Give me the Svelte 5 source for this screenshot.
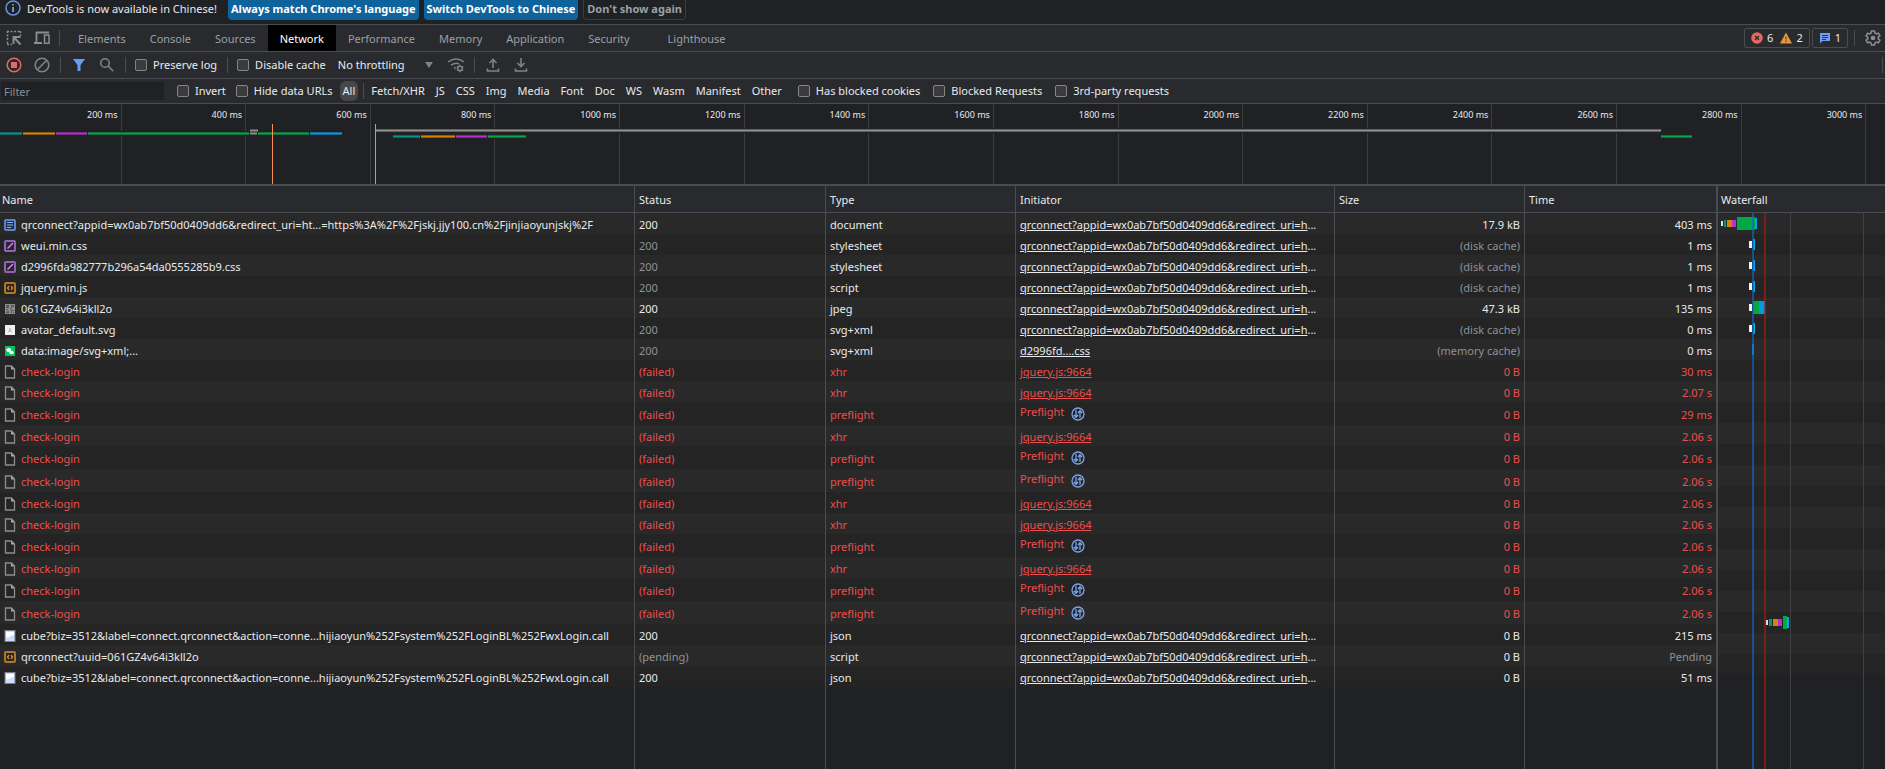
<script lang="ts">
  const tabs = [
    "Elements",
    "Console",
    "Sources",
    "Network",
    "Performance",
    "Memory",
    "Application",
    "Security",
    "Lighthouse",
  ];

  const types = [
    "Fetch/XHR",
    "JS",
    "CSS",
    "Img",
    "Media",
    "Font",
    "Doc",
    "WS",
    "Wasm",
    "Manifest",
    "Other",
  ];

  let activeTab = $state("Network");
  let activeType = $state("All");

  // overview scale: the visible window starts at 5 ms and spans 3025 ms
  const ticks = Array.from({ length: 15 }, (_, i) => (i + 1) * 200);
  const tickLeft = (ms: number) => ((ms - 5) / 3025) * 100;

  const teal = "#009688";
  const orange = "#d68400";
  const purple = "#b72fd0";
  const green = "#00a846";
  const blue = "#039be5";
  const grey = "#8f8f8a";

  // x, width, y, colour
  const overview: [number, number, number, string][] = [
    [0, 22, 28, teal],
    [23, 32, 28, orange],
    [56, 31, 28, purple],
    [88, 161, 28, green],
    [258, 51, 28, green],
    [310, 32, 28, blue],
    [376, 1285, 25, grey],
    [393, 27, 31, teal],
    [421, 34, 31, orange],
    [456, 31, 31, purple],
    [488, 38, 31, green],
    [1661, 31, 31, green],
  ];

  const long = "qrconnect?appid=wx0ab7bf50d0409dd6&redirect_uri=h";
  const cube =
    "cube?biz=3512&label=connect.qrconnect&action=conne...hijiaoyun%252Fsystem%252FLoginBL%252FwxLogin.call";

  const ok = (icon: string, name: string, type: string, size: string, time: string, rest = {}) => ({
    icon, name, type, size, time, status: "200", initiator: long, cut: true, ...rest,
  });
  const failed = (type: string, time = "2.06 s") => ({
    icon: "file", name: "check-login", type, size: "0 B", time, status: "(failed)",
    initiator: type === "xhr" ? "jquery.js:9664" : "Preflight", cut: false, error: true,
  });

  const rows: any[] = [
    ok("doc", "qrconnect?appid=wx0ab7bf50d0409dd6&redirect_uri=ht...=https%3A%2F%2Fjskj.jjy100.cn%2Fjinjiaoyunjskj%2F", "document", "17.9 kB", "403 ms"),
    ok("css", "weui.min.css", "stylesheet", "(disk cache)", "1 ms", { cached: true }),
    ok("css", "d2996fda982777b296a54da0555285b9.css", "stylesheet", "(disk cache)", "1 ms", { cached: true }),
    ok("js", "jquery.min.js", "script", "(disk cache)", "1 ms", { cached: true }),
    ok("qr", "061GZ4v64i3kll2o", "jpeg", "47.3 kB", "135 ms"),
    ok("avatar", "avatar_default.svg", "svg+xml", "(disk cache)", "0 ms", { cached: true }),
    ok("wechat", "data:image/svg+xml;...", "svg+xml", "(memory cache)", "0 ms", { cached: true, initiator: "d2996fd....css", cut: false }),
    failed("xhr", "30 ms"),
    failed("xhr", "2.07 s"),
    failed("preflight", "29 ms"),
    failed("xhr"),
    failed("preflight"),
    failed("preflight"),
    failed("xhr"),
    failed("xhr"),
    failed("preflight"),
    failed("xhr"),
    failed("preflight"),
    failed("preflight"),
    ok("image", cube, "json", "0 B", "215 ms"),
    ok("js", "qrconnect?uuid=061GZ4v64i3kll2o", "script", "0 B", "Pending", { status: "(pending)", pending: true }),
    ok("image", cube, "json", "0 B", "51 ms"),
  ];

  // waterfall bars: row, x, width, height, colour
  const queued = "#e0e0e0";
  const bars: [number, number, number, number, string][] = [
    [0, 3, 2, 5, queued],
    [0, 6, 2, 7, teal],
    [0, 9, 5, 7, orange],
    [0, 14, 4, 7, purple],
    [0, 19, 18, 13, green],
    [0, 37, 2, 11, "#03a9f4"],
    ...[1, 2, 3, 5].flatMap((r): [number, number, number, number, string][] => [
      [r, 31, 3, 7, "#f1f1f1"],
      [r, 35, 2, 11, "#03a9f4"],
    ]),
    [4, 31, 3, 7, "#f1f1f1"],
    [4, 35, 6, 13, green],
    [4, 41, 6, 13, blue],
    [6, 34, 2, 11, "#039be5"],
    [19, 48, 2, 5, queued],
    [19, 51, 3, 7, teal],
    [19, 55, 5, 7, orange],
    [19, 60, 4, 7, purple],
    [19, 65, 4, 13, green],
    [19, 69, 2, 11, "#03a9f4"],
  ];
</script>

{#snippet check(label: string)}
  <label class="check"><input type="checkbox" />{label}</label>
{/snippet}

{#snippet fileIcon(kind: string)}
  <svg width="12" height="14" viewBox="0 0 12 14">
    {#if kind === "doc"}
      <rect x="1" y="2" width="10" height="10" rx="1" fill="#253046" stroke="#5b83c4" stroke-width="2" />
      <path d="M3 4.5h6M3 7h6M3 9.5h4" stroke="#8ab4f8" />
    {:else if kind === "css"}
      <rect x="1" y="2" width="10" height="10" rx="1" fill="#2b2430" stroke="#9563b5" stroke-width="2" />
      <path d="M3.5 9.5l2-2M5.5 7.5l3.5-3.5" stroke="#c58af9" stroke-width="1.5" />
    {:else if kind === "js"}
      <rect x="1" y="2" width="10" height="10" rx="1" fill="#2b2620" stroke="#b0752a" stroke-width="2" />
      <path d="M5 5.2L3.5 7 5 8.8M7 5.2L8.5 7 7 8.8" fill="none" stroke="#e8963a" stroke-width="1.2" />
    {:else if kind === "qr"}
      <rect x="1" y="2" width="10" height="10" fill="#8c8c8c" />
      <path d="M2 3h3v3H2zM7 3h3v2H8v1H7zM6 6h1v2H6zM2 7h2v1H2zM3 9h2v2H2v-1h1zM7 8h3v1H8v2H7zM9 10h1v1H9z" fill="#5a5a5a" />
    {:else if kind === "avatar"}
      <rect x="1" y="2" width="10" height="10" fill="#efefef" />
      <path d="M5 5h2v2.500l1 .5v1H4V8l1-.5z" fill="#c4c4c4" />
    {:else if kind === "wechat"}
      <rect x="1" y="2" width="10" height="10" fill="#07c160" />
      <ellipse cx="4.800" cy="6" rx="2.500" ry="2" fill="#fff" />
      <ellipse cx="7.500" cy="8.500" rx="2.300" ry="1.800" fill="#fff" />
    {:else if kind === "image"}
      <rect x="1" y="1.500" width="10" height="11" fill="#cfdcf7" stroke="#77808f" />
      <path d="M2 8.500V3h8v3.500H7L5.500 8z" fill="#fff" />
    {:else}
      <path d="M2 1h5.500L10.500 4v9H1.500V1z" fill="none" stroke="#8d8d8d" stroke-width="1.300" />
      <path d="M7 1v3.500h3.500z" fill="#a9a9a9" />
    {/if}
  </svg>
{/snippet}

<div class="devtools">
  <div class="infobar">
    <svg width="16" height="16" viewBox="0 0 16 16">
      <circle cx="8" cy="8" r="7" fill="none" stroke="#6c93e0" stroke-width="1.500" />
      <path d="M8 7v5M8 4v1.600" stroke="#8ab4f8" stroke-width="1.500" />
    </svg>
    <span class="message">DevTools is now available in Chinese!</span>
    <button class="primary">Always match Chrome's language</button>
    <button class="primary">Switch DevTools to Chinese</button>
    <button class="quiet">Don't show again</button>
  </div>

  <div class="tabbar">
    <button class="icon" aria-label="Inspect element">
      <svg width="16" height="16" viewBox="0 0 16 16" fill="none" stroke="#8b8d90">
        <path d="M1 1.500h14M1.500 1v14M14.500 1v5M1 14.500h5" stroke-width="1.500" stroke-dasharray="2 1.500" />
        <path d="M7.500 14V7h7M8 7.500l6.500 7" stroke-width="2" />
      </svg>
    </button>
    <button class="icon" aria-label="Toggle device toolbar">
      <svg width="18" height="16" viewBox="0 0 18 16" fill="none" stroke="#8b8d90">
        <path d="M3.500 12V2.500H16M1 13h8" stroke-width="1.800" />
        <rect x="11.500" y="5" width="4.500" height="8.300" stroke-width="1.500" />
      </svg>
    </button>
    <i class="divider"></i>
    <nav>
      {#each tabs as tab}
        <button
          class={tab === activeTab ? "tab active" : "tab"}
          onclick={() => (activeTab = tab)}>{tab}</button
        >
      {/each}
    </nav>
    <div class="status">
      <button class="counter">
        <svg width="12" height="12" viewBox="0 0 12 12">
          <circle cx="6" cy="6" r="5.800" fill="#e46962" />
          <path d="M4 4l4 4M8 4L4 8" stroke="#292a2d" stroke-width="1.300" />
        </svg>
        <span>6</span>
        <svg width="12" height="12" viewBox="0 0 12 12">
          <path d="M6 .5L12 11.500H0z" fill="#e8963a" />
          <path d="M6 4.500v3M6 8.500v1.500" stroke="#7a4a10" stroke-width="1.300" />
        </svg>
        <span>2</span>
      </button>
      <button class="counter">
        <svg width="12" height="12" viewBox="0 0 12 12">
          <path d="M1 1h10v8H3.500L1 11.500z" fill="#6f9cf0" />
          <path d="M3 3.500h6M3 5.500h6M3 7.500h4" stroke="#24385f" />
        </svg>
        <span>1</span>
      </button>
      <i class="divider"></i>
      <button class="icon gear" aria-label="Settings">
        <svg width="16" height="16" viewBox="0 0 16 16">
          <path
            d="M6.500 1h3l.4 2 1.500.9 2-.7 1.500 2.600L13.300 7.200v1.600l1.600 1.400-1.500 2.600-2-.7-1.500.9-.4 2h-3l-.4-2-1.500-.9-2 .7-1.500-2.600 1.600-1.400V7.200L1.100 5.800l1.500-2.600 2 .7 1.500-.9z"
            fill="none" stroke="#8b8d90" stroke-width="1.500" />
          <circle cx="8" cy="8" r="2.300" fill="#8b8d90" />
        </svg>
      </button>
    </div>
  </div>

  <div class="toolbar">
    <button class="icon" aria-label="Stop recording">
      <svg width="16" height="16" viewBox="0 0 16 16">
        <circle cx="8" cy="8" r="6.800" fill="none" stroke="#e46962" stroke-width="1.500" />
        <rect x="5" y="5" width="6" height="6" fill="#e46962" />
      </svg>
    </button>
    <button class="icon" aria-label="Clear">
      <svg width="16" height="16" viewBox="0 0 16 16" fill="none" stroke="#808285" stroke-width="1.600">
        <circle cx="8" cy="8" r="6.800" />
        <path d="M3.500 12.500l9-9" />
      </svg>
    </button>
    <i class="divider"></i>
    <button class="icon" aria-label="Filter">
      <svg width="14" height="14" viewBox="0 0 14 14"><path d="M1 1h12L8.500 7v6h-3V7z" fill="#669df6" /></svg>
    </button>
    <button class="icon" aria-label="Search">
      <svg width="16" height="16" viewBox="0 0 16 16" fill="none" stroke="#808285" stroke-width="1.600">
        <circle cx="6" cy="6" r="4.300" />
        <path d="M9.300 9.300l5 5" />
      </svg>
    </button>
    <i class="divider"></i>
    {@render check("Preserve log")}
    <i class="divider"></i>
    {@render check("Disable cache")}
    <span class="throttle">
      <select aria-label="Throttling">
        <option>No throttling</option>
      </select>
      <svg width="8" height="6" viewBox="0 0 8 6"><path d="M0 0h8L4 6z" fill="#808285" /></svg>
    </span>
    <button class="icon" aria-label="Network conditions">
      <svg width="18" height="16" viewBox="0 0 18 16" fill="none" stroke="#808285" stroke-width="1.500">
        <path d="M1 5Q9-1 17 5M4 8.200Q8.500 5 12 7" />
        <path d="M6.500 10.500l2 2.500V9.500z" fill="#808285" stroke="none" />
        <circle cx="13" cy="11.500" r="2.200" />
        <path d="M13 7.800v1.500M13 13.800v1.500M9.800 9.700l1.200.7M15 12.700l1.300.7M9.800 13.400l1.200-.7M15 10.400l1.300-.7" />
      </svg>
    </button>
    <i class="divider"></i>
    <button class="icon" aria-label="Import HAR">
      <svg width="14" height="14" viewBox="0 0 14 14" fill="none" stroke="#808285" stroke-width="1.600">
        <path d="M7 10V1.500M3.500 5L7 1.500 10.500 5M1.500 10.500v2.500h11v-2.500" />
      </svg>
    </button>
    <button class="icon" aria-label="Export HAR">
      <svg width="14" height="14" viewBox="0 0 14 14" fill="none" stroke="#808285" stroke-width="1.600">
        <path d="M7 0v8.500M3.500 5L7 8.500 10.500 5M1.500 10.500v2.500h11v-2.500" />
      </svg>
    </button>
    <i class="divider end"></i>
  </div>

  <div class="filterbar">
    <input class="filter" type="text" placeholder="Filter" aria-label="Filter" />
    {@render check("Invert")}
    {@render check("Hide data URLs")}
    <div class="types">
      <button class:active={activeType === "All"} onclick={() => (activeType = "All")}>All</button>
      <i class="divider"></i>
      {#each types as type}
        <button class:active={activeType === type} onclick={() => (activeType = type)}>{type}</button>
      {/each}
    </div>
    <div class="more">
      {@render check("Has blocked cookies")}
      {@render check("Blocked Requests")}
      {@render check("3rd-party requests")}
    </div>
  </div>

  <div class="overview">
    {#each ticks as ms}
      <span class="tick" style="width: {tickLeft(ms)}%">{ms} ms</span>
    {/each}
    <svg width="100%" height="80" viewBox="0 0 1885 80" preserveAspectRatio="none">
      {#each overview as [x, width, y, color]}
        <rect {x} y={y - 1} {width} height="5" fill="#202124" />
        <rect {x} {y} {width} height="3" fill={color} opacity="0.6" />
        <rect {x} y={y + 1} {width} height="1" fill={color} />
      {/each}
      <path d="M250 26.500h8M250 29.500h7" stroke="#8f8f8a" stroke-width="2" />
      <rect x="272" y="20" width="1" height="60" fill="#f79256" />
      <rect x="375" y="20" width="1" height="60" fill="#3fd0c0" />
    </svg>
  </div>

  <div class="requests">
    <table>
      <colgroup>
        <col />
        <col class="status-col" />
        <col class="narrow" />
        <col class="wide" />
        <col class="narrow" />
        <col class="time" />
      </colgroup>
      <thead>
        <tr>
          <th>Name</th>
          <th>Status</th>
          <th>Type</th>
          <th>Initiator</th>
          <th>Size</th>
          <th>Time</th>
        </tr>
      </thead>
      <tbody>
        {#each rows as row}
          <tr class:error={row.error} class:preflight={row.type === "preflight"}>
            <td>
              <div class="name">{@render fileIcon(row.icon)}<span>{row.name}</span></div>
            </td>
            <td class:dim={row.cached || row.pending}>{row.status}</td>
            <td>{row.type}</td>
            <td>
              {#if row.type === "preflight"}
                <div class="initiator">
                  <span>Preflight</span>
                  <svg width="14" height="14" viewBox="0 0 14 14" fill="none" stroke="#7ba3ea">
                    <circle cx="7" cy="7" r="6" stroke-width="1.300" />
                    <path d="M5 3v7M2.800 8L5 10.300 7 8M9 11V4M7 6l2-2.300L11.200 6" stroke-width="1.300" />
                  </svg>
                </div>
              {:else}
                <a href="#source">{row.initiator}</a>{row.cut ? "..." : ""}
              {/if}
            </td>
            <td class="num" class:dim={row.cached}>{row.size}</td>
            <td class="num" class:dim={row.pending}>{row.time}</td>
          </tr>
        {/each}
        <tr class="filler">
          <td></td><td></td><td></td><td></td><td></td><td></td>
        </tr>
      </tbody>
    </table>

    <div class="waterfall">
      <div class="heading">Waterfall</div>
      <svg width="100%" height="100%">
        {#each rows as _, i}
          <rect x="0" y={i * 21} width="100%" height="21" fill={i % 2 ? "#242424" : "#292929"} />
        {/each}
        <path d="M72.500 0V2000M145.500 0V2000" stroke="#404144" />
        {#each bars as [row, x, width, height, color]}
          <rect {x} y={row * 21 + 10 - (height - 1) / 2} {width} {height} fill={color} />
        {/each}
        <rect x="34" y="0" width="2" height="100%" fill="#1565c0" opacity="0.65" />
        <rect x="46" y="0" width="2" height="100%" fill="#a31b12" opacity="0.65" />
      </svg>
    </div>
  </div>
</div>

<style>
  :global(body) {
    margin: 0;
    background: #202124;
  }

  .devtools {
    min-height: 100vh;
    display: flex;
    flex-direction: column;
    font-family: "Noto Sans", "Segoe UI", sans-serif;
    font-size: 11px;
    line-height: 16px;
    color: #e8eaed;
    background: #202124;
    white-space: nowrap;
  }

  button,
  input,
  select {
    font: inherit;
    color: inherit;
    background: none;
    border: none;
    margin: 0;
    padding: 0;
  }

  svg {
    display: block;
    flex: none;
  }

  .divider {
    width: 1px;
    height: 16px;
    background: #494c50;
    flex: none;
  }

  .icon {
    width: 28px;
    display: flex;
    justify-content: center;
    flex: none;
  }

  .infobar {
    height: 24px;
    display: flex;
    align-items: flex-start;
    gap: 5px;
    padding-left: 5px;
    border-bottom: 1px solid #494c50;
  }

  .infobar .message {
    width: 196px;
    padding: 1px 0 0 1px;
  }

  .infobar button {
    height: 20px;
    padding: 0 3px 2px;
    border-radius: 0 0 4px 4px;
    font-weight: 700;
  }

  .infobar .primary {
    background: #0e639c;
    color: #fff;
  }

  .infobar .quiet {
    border: 1px solid #3c3d40;
    border-top: none;
    color: #9aa0a6;
  }

  .tabbar,
  .toolbar,
  .filterbar {
    display: flex;
    align-items: center;
    background: #292a2d;
    border-bottom: 1px solid #494c50;
  }

  .tabbar,
  .toolbar {
    height: 26px;
  }

  .tabbar > .divider {
    margin: 0 6px 0 3px;
  }

  nav {
    display: flex;
    align-self: stretch;
    flex: 1;
  }

  .tab {
    padding: 1px 12px 0;
    color: #9aa0a6;
  }

  .tab.active {
    background: #000;
    color: #fff;
  }

  .tab:last-child {
    margin-left: 14px;
  }

  .status {
    display: flex;
    align-items: center;
    gap: 2px;
  }

  .counter {
    height: 20px;
    display: flex;
    align-items: center;
    gap: 4px;
    padding: 0 6px;
    border: 1px solid #494c50;
    border-radius: 2px;
  }

  .counter span + svg {
    margin-left: 3px;
  }

  .status .divider {
    margin-left: 4px;
  }

  .gear {
    padding-left: 4px;
  }

  .toolbar .divider {
    margin: 0 4px;
  }

  .toolbar .divider.end {
    margin: 0 2px 0 auto;
  }

  .check {
    display: flex;
    align-items: center;
    gap: 6px;
    padding: 0 5px;
  }

  .toolbar .check {
    padding-right: 6px;
  }

  .check input {
    appearance: none;
    width: 12px;
    height: 12px;
    background: #3b3b3b;
    border: 1px solid #858585;
    border-radius: 2px;
  }

  .throttle {
    display: flex;
    align-items: center;
    gap: 20px;
    padding: 0 9px 0 6px;
  }

  .throttle select {
    appearance: none;
  }

  .filterbar {
    height: 24px;
  }

  .filter {
    width: 160px;
    height: 18px;
    margin: 0 8px 0 1px;
    padding-left: 3px;
    background: #202124;
  }

  .filter::placeholder {
    color: #8b8d90;
  }

  .types {
    display: flex;
    align-items: center;
    gap: 1px;
    padding: 0 6px 0 2px;
  }

  .types .divider {
    margin: 0 1px 0 4px;
  }

  .types button {
    height: 20px;
    padding: 0 5px;
  }

  .types .active {
    padding: 0 3px;
    background: #474747;
    border-radius: 6px;
  }

  .more {
    display: flex;
    gap: 3px;
  }

  .overview {
    position: relative;
    height: 80px;
    border-bottom: 2px solid #494c50;
    overflow: hidden;
  }

  .tick {
    position: absolute;
    top: 0;
    left: 0;
    box-sizing: border-box;
    height: 80px;
    padding: 3px 3px 0 0;
    border-right: 1px solid #3c3d40;
    font-size: 9px;
    text-align: right;
  }

  .overview svg {
    position: absolute;
    top: 0;
    left: 0;
  }

  .requests {
    flex: 1;
    display: flex;
  }

  table {
    flex: 1;
    table-layout: fixed;
    border-collapse: separate;
    border-spacing: 0;
  }

  .narrow {
    width: 190px;
  }

  .status-col {
    width: 191px;
  }

  .wide {
    width: 319px;
  }

  .time {
    width: 193px;
  }

  th,
  .heading {
    box-sizing: border-box;
    height: 27px;
    background: #292a2d;
    border-bottom: 1px solid #494c50;
    font-weight: 400;
    text-align: left;
  }

  th,
  td {
    box-sizing: border-box;
    padding: 1px 4px 0;
    border-right: 1px solid #494c50;
    overflow: hidden;
  }

  th:first-child,
  td:first-child {
    padding-left: 2px;
  }

  td {
    height: 21px;
    padding-top: 2px;
  }

  th:last-child,
  td:last-child {
    border-right-width: 2px;
  }

  tbody tr {
    background: #242424;
  }

  tbody tr:nth-child(odd) {
    background: #292929;
  }

  tbody tr.filler {
    background: #202124;
  }

  .preflight td {
    height: 23px;
  }

  .filler td {
    height: auto;
  }

  .error {
    color: #ed4e4c;
  }

  .dim {
    color: #8f9296;
  }

  .num {
    text-align: right;
  }

  .name {
    display: flex;
    align-items: center;
    gap: 5px;
    padding-left: 2px;
  }

  a {
    color: inherit;
    text-decoration: underline;
  }

  .initiator {
    display: flex;
    gap: 7px;
    height: 20px;
    line-height: 14px;
  }

  .initiator svg {
    margin-top: 2px;
  }

  .waterfall {
    width: 167px;
    display: flex;
    flex-direction: column;
  }

  .heading {
    padding-left: 3px;
    line-height: 27px;
  }

  .waterfall svg {
    flex: 1 1 0;
    min-height: 0;
  }
</style>
